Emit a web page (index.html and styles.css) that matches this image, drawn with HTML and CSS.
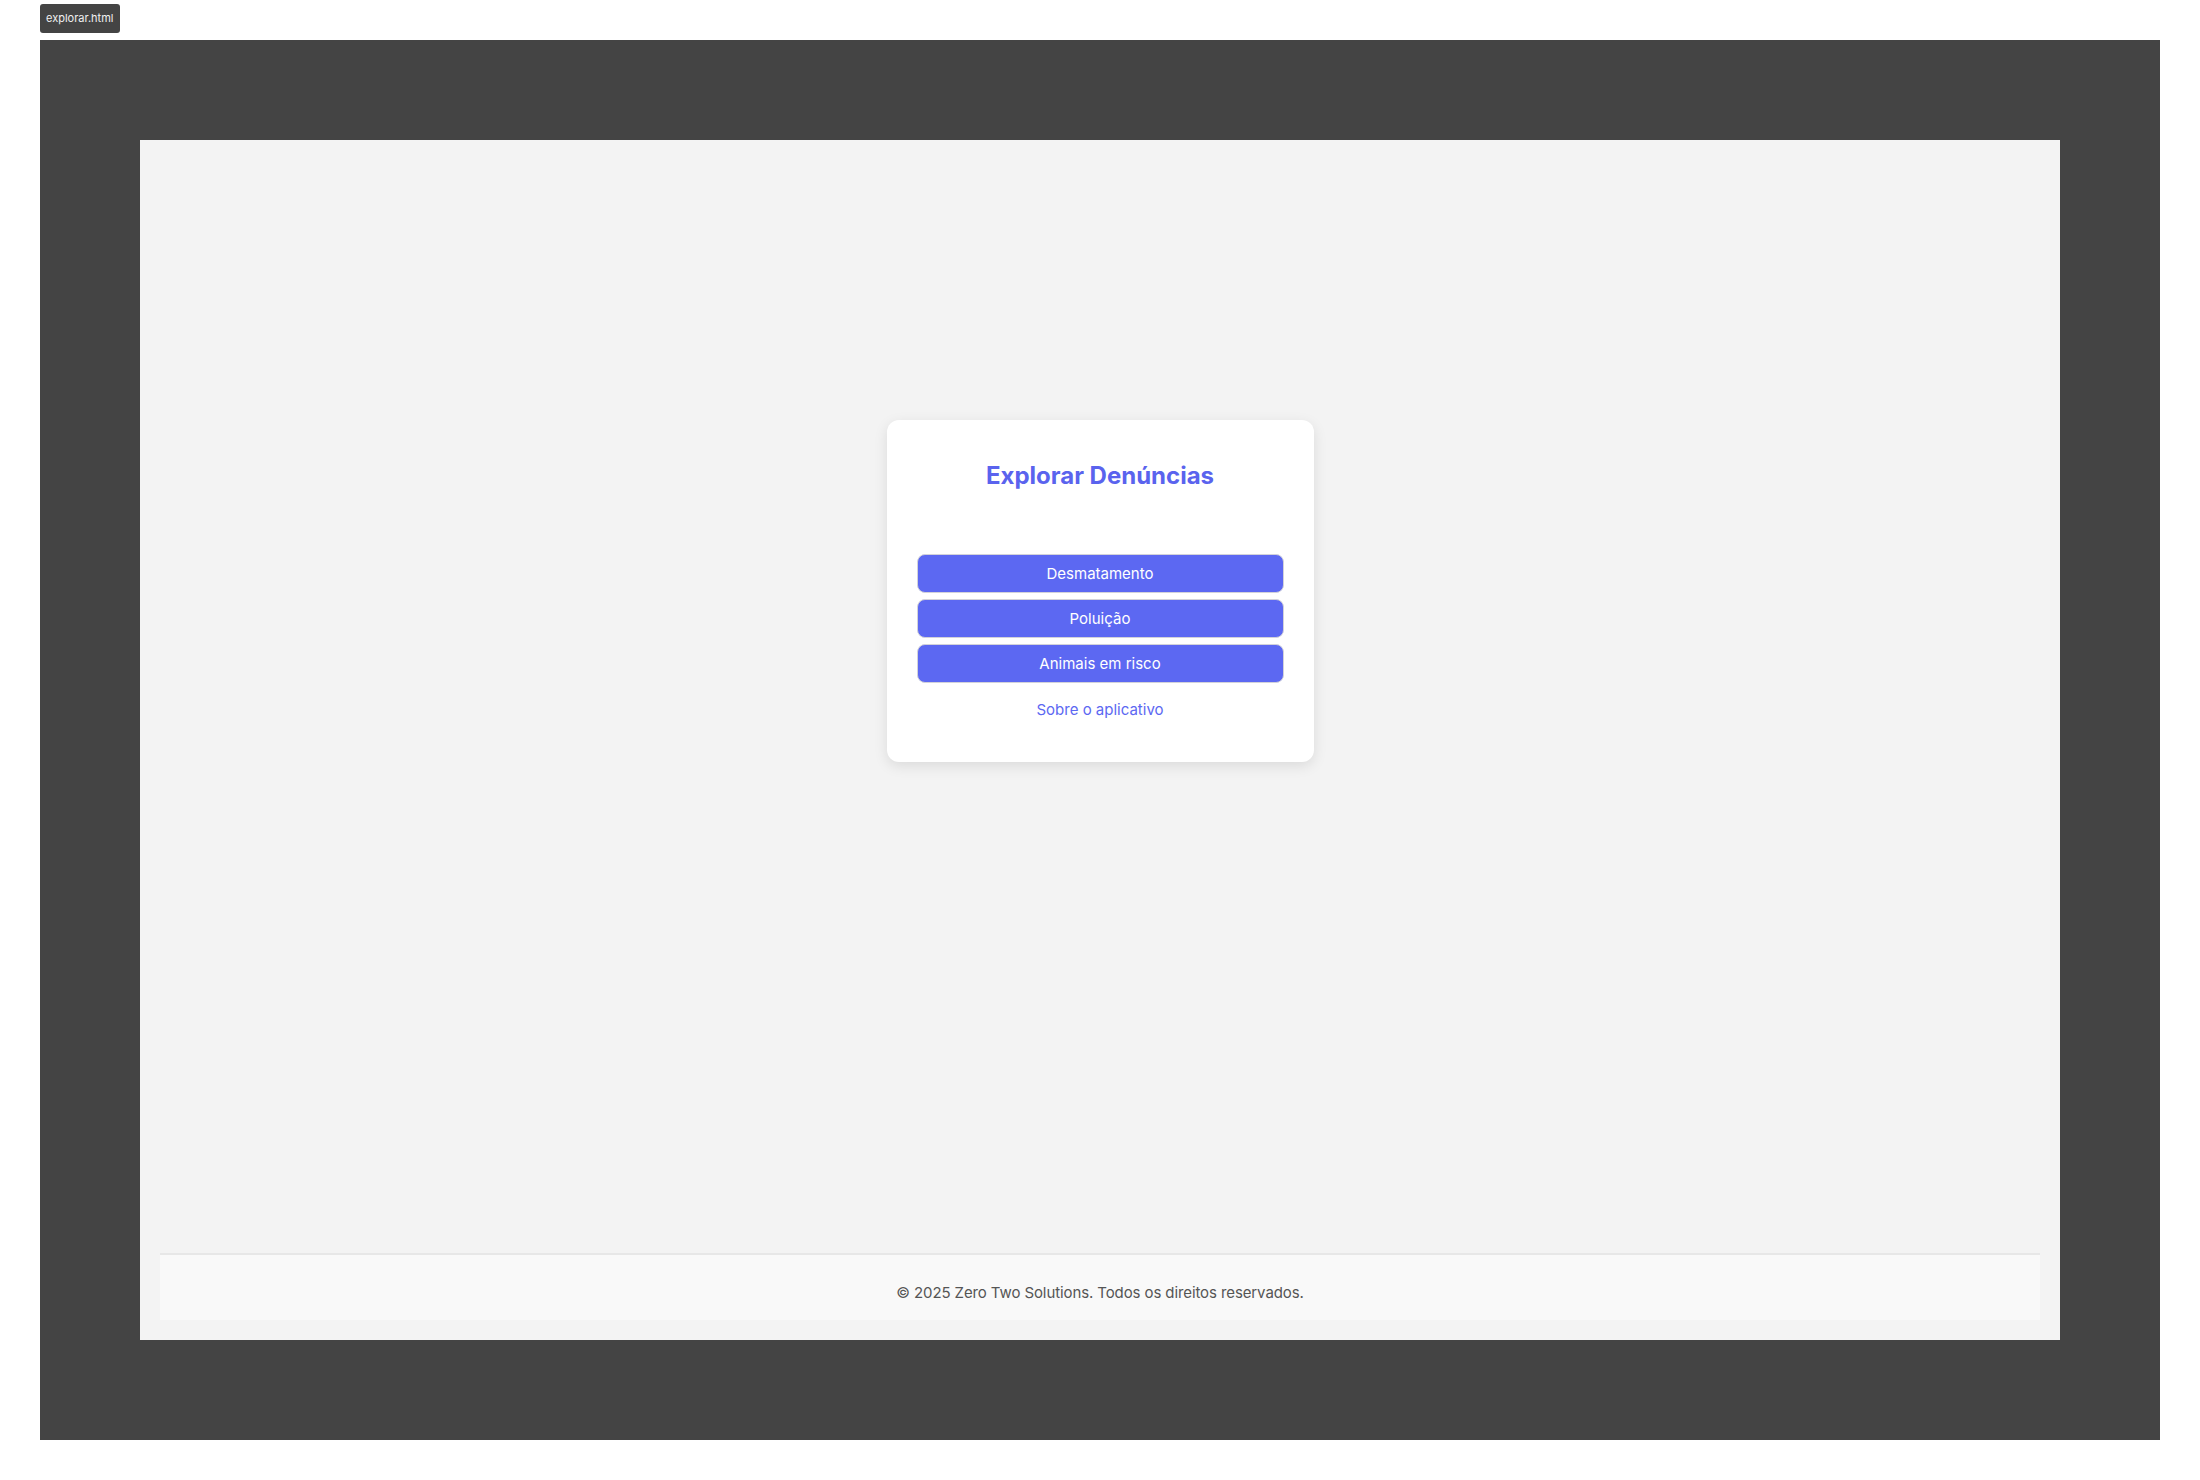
FILE: index.html
```html
<!DOCTYPE html>
<html lang="pt">
<head>
<meta charset="utf-8">
<title>explorar.html</title>
<link rel="stylesheet" href="styles.css">
</head>
<body>
<div class="tab">explorar.html</div>
<div class="frame">
  <div class="screen">
    <main class="main">
      <section class="card">
        <h1 class="title">Explorar Denúncias</h1>
        <div class="buttons">
          <button class="btn">Desmatamento</button>
          <button class="btn">Poluição</button>
          <button class="btn">Animais em risco</button>
        </div>
        <a class="link" href="#">Sobre o aplicativo</a>
      </section>
    </main>
    <footer class="footer">© 2025 Zero Two Solutions. Todos os direitos reservados.</footer>
  </div>
</div>
</body>
</html>
```

FILE: styles.css
```css
html, body {
  margin: 0;
  padding: 0;
  background: #ffffff;
}
body {
  font-family: Inter, "Noto Sans", sans-serif;
  padding: 4px 40px 0 40px;
}
.tab {
  display: inline-block;
  box-sizing: border-box;
  height: 29px;
  line-height: 29px;
  padding: 0 6px;
  background: #444444;
  color: #f0f0f0;
  font-size: 11px;
  border-radius: 3px;
}
.frame {
  margin-top: 7px;
  width: 2120px;
  height: 1400px;
  box-sizing: border-box;
  padding: 100px;
  background: #444444;
}
.screen {
  width: 1920px;
  height: 1200px;
  background: #f3f3f3;
  display: flex;
  flex-direction: column;
}
.main {
  flex: 1;
  display: flex;
  justify-content: center;
  align-items: flex-start;
  padding-top: 280px;
}
.card {
  width: 427px;
  box-sizing: border-box;
  padding: 41px 30px 43px 30px;
  background: #ffffff;
  border-radius: 12px;
  box-shadow: 0 4px 14px rgba(0, 0, 0, 0.1);
  display: flex;
  flex-direction: column;
  align-items: stretch;
  text-align: center;
}
.title {
  margin: 0;
  font-size: 24px;
  font-weight: 700;
  line-height: 29px;
  color: #5a63ee;
}
.buttons {
  margin-top: 64px;
  display: flex;
  flex-direction: column;
  gap: 6px;
}
.btn {
  height: 39px;
  box-sizing: border-box;
  border: 1px solid #d2d2da;
  border-radius: 8px;
  background: #5c68f2;
  color: #ffffff;
  font-family: Inter, "Noto Sans", sans-serif;
  font-size: 15px;
  padding: 0;
  cursor: pointer;
}
.link {
  margin-top: 17px;
  font-size: 15px;
  line-height: 19px;
  color: #5c68f2;
  text-decoration: none;
}
.footer {
  margin: 0 20px 20px 20px;
  height: 67px;
  box-sizing: border-box;
  padding-top: 10px;
  border-top: 2px solid #e7e7e7;
  background: #f9f9f9;
  display: flex;
  align-items: center;
  justify-content: center;
  font-size: 15px;
  letter-spacing: -0.1px;
  color: #555555;
}
```
